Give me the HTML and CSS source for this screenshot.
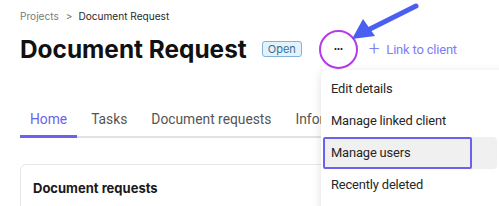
FILE: index.html
```html
<!DOCTYPE html>
<html>
<head>
<meta charset="utf-8">
<link rel="stylesheet" href="styles.css">
</head>
<body>
<div class="page">
  <div class="crumbs"><span class="crumb-muted">Projects</span><span class="crumb-sep">&gt;</span><span class="crumb-current">Document Request</span></div>
  <div class="header">
    <h1 class="title">Document Request</h1>
    <span class="badge">Open</span>
    <button class="more"><span class="dots">&middot;&middot;&middot;</span></button>
    <a class="link"><span class="plus">+</span>Link to client</a>
  </div>
  <nav class="tabs">
    <span class="tab active">Home</span>
    <span class="tab">Tasks</span>
    <span class="tab">Document requests</span>
    <span class="tab">Information</span>
    <span class="tab-fill"></span>
  </nav>
  <section class="card">
    <h2 class="card-title">Document requests</h2>
  </section>
</div>

<div class="menu">
  <div class="menu-item">Edit details</div>
  <div class="menu-item">Manage linked client</div>
  <div class="menu-item hovered"><span class="focus-ring"></span>Manage users</div>
  <div class="menu-item">Recently deleted</div>
</div>

<svg class="arrow" width="80" height="45" viewBox="0 0 80 45">
  <line x1="66" y1="4" x2="16" y2="29" stroke="#4a5ef2" stroke-width="5" stroke-linecap="round"/>
  <polygon points="2,37 13,17 25,34" fill="#4a5ef2"/>
</svg>
</body>
</html>
```
FILE: styles.css
```css
* { box-sizing: border-box; }
html, body { margin: 0; padding: 0; background: #fff; }
body {
  width: 499px; height: 206px; overflow: hidden; position: relative;
  font-family: Inter, "Noto Sans", sans-serif; color: #1b1b1b;
}
.page { padding: 9px 0 0 20px; }
.crumbs { font-size: 10.1px; line-height: 14px; display: flex; align-items: center; }
.crumb-muted { color: #7a7a7a; }
.crumb-sep { color: #7a7a7a; margin: 0 6px 0 7px; }
.crumb-current { color: #2a2a2a; }

.header { display: flex; align-items: center; height: 40px; margin-top: 6px; }
.title { margin: 0; font-size: 24.4px; font-weight: 700; color: #111; line-height: 30px; }
.badge {
  margin-left: 15px; height: 16px; padding: 0 5px; font-size: 11px; line-height: 14px;
  color: #3b6e96; background: #e4f2fc; border: 1px solid #7fb3d9; border-radius: 3px;
}
.more {
  margin-left: 17px; width: 39px; height: 39px; border-radius: 50%;
  border: 2px solid #b53ae8; background: #fff; padding: 0;
  display: flex; align-items: center; justify-content: center;
}
.dots { font-size: 12px; font-weight: 700; color: #222; line-height: 10px; letter-spacing: -1px; }
.link {
  margin-left: 11px; font-family: Roboto, sans-serif; font-size: 13px; letter-spacing: -0.2px;
  color: #7b80f2; display: flex; align-items: center;
}
.plus { font-size: 19px; font-weight: 300; margin-right: 7px; line-height: 20px; }

.tabs {
  display: flex; align-items: flex-start; margin-top: 41px; width: 301px; overflow: hidden;
  font-family: Roboto, sans-serif;
}
.tab {
  font-size: 13.8px; line-height: 18px; color: #555; white-space: nowrap;
  padding: 0 12px 8px 12px; border-bottom: 2px solid #e2e2e2;
}
.tab.active { color: #6c61eb; padding: 0 10px 7px 10px; border-bottom: 3px solid #6c61eb; }
.tab.active + .tab { padding-left: 14px; }
.tab-fill { flex: 1; height: 28px; border-bottom: 2px solid #e2e2e2; }

.card {
  margin-top: 26px; width: 320px; height: 60px;
  border: 1px solid #e6e6e6; border-radius: 6px; padding: 14px 12px;
}
.card-title { margin: 0; font-size: 13px; font-weight: 700; color: #1a1a1a; line-height: 18px; }

.menu {
  position: absolute; left: 321px; top: 70px; width: 200px; height: 160px;
  background: #fff; border-radius: 6px;
  box-shadow: 0 2px 10px rgba(0,0,0,0.13);
  padding-top: 3px;
  font-family: Roboto, sans-serif;
}
.menu-item {
  position: relative; height: 32px; line-height: 32px; padding-left: 8px;
  font-size: 12.9px; letter-spacing: -0.15px; color: #262626; margin: 0 2px;
}
.menu-item.hovered { background: #f0f0f0; border-radius: 4px; width: 174px; }
.focus-ring {
  position: absolute; left: 0; top: 0; width: 149px; height: 32px;
  border: 2px solid #6b61ee; border-radius: 2px;
}
.arrow { position: absolute; left: 350px; top: 2px; }
```
